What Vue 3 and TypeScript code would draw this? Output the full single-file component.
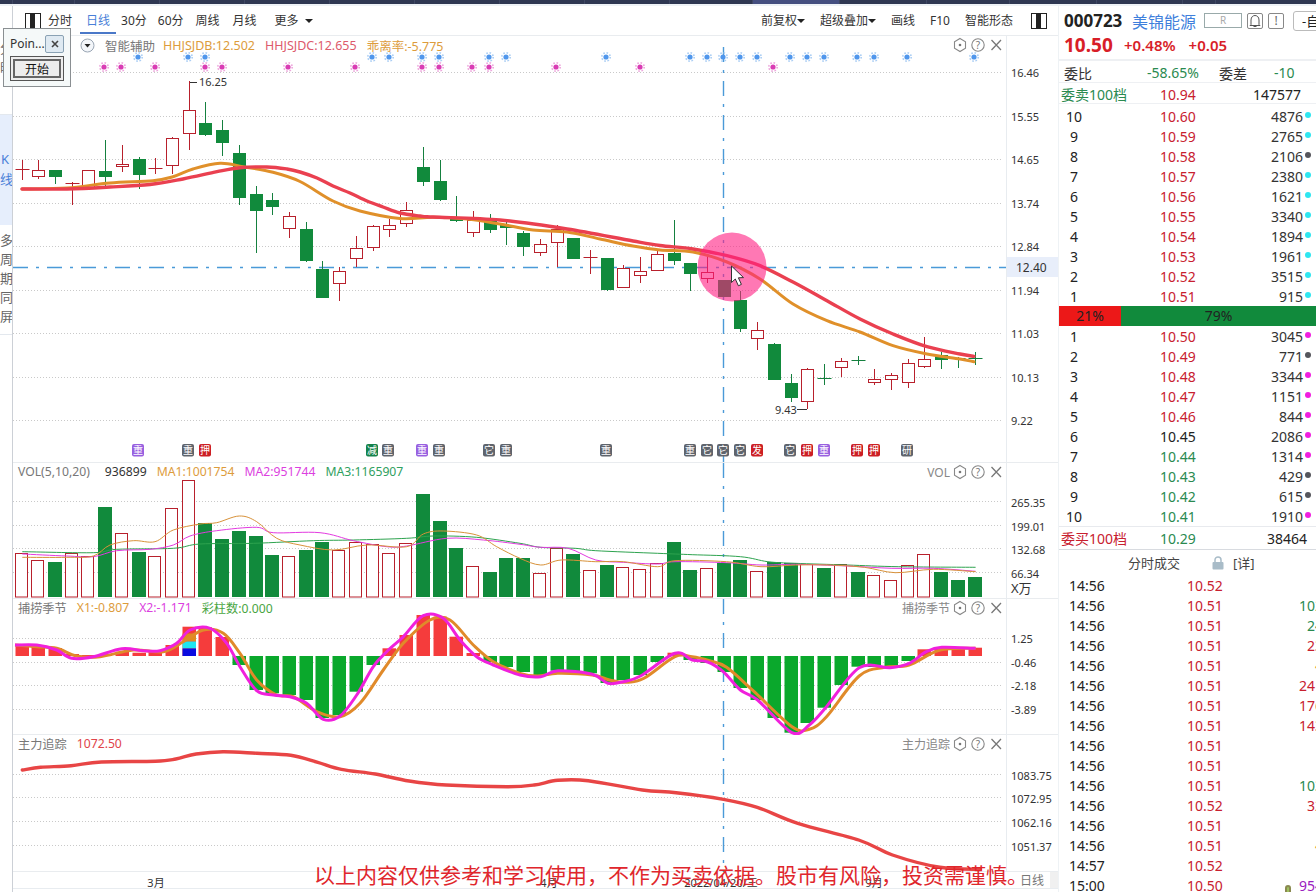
<script setup lang="ts">
type Pt = [number, number]
type Candle = [number, number, number, number, 'u' | 'd']

const X0 = 21.5
const STEP = 16.72
const xAt = (i: number) => X0 + STEP * i

// Catmull-Rom，把折线点变成平滑曲线
const smooth = (pts: Pt[]) => {
  let d = `M${pts[0][0].toFixed(1)} ${pts[0][1].toFixed(1)}`
  for (let i = 0; i < pts.length - 1; i++) {
    const p0 = pts[Math.max(i - 1, 0)]
    const p1 = pts[i]
    const p2 = pts[i + 1]
    const p3 = pts[Math.min(i + 2, pts.length - 1)]
    const c1x = p1[0] + (p2[0] - p0[0]) / 6
    const c1y = p1[1] + (p2[1] - p0[1]) / 6
    const c2x = p2[0] - (p3[0] - p1[0]) / 6
    const c2y = p2[1] - (p3[1] - p1[1]) / 6
    d += ` C${c1x.toFixed(1)} ${c1y.toFixed(1)} ${c2x.toFixed(1)} ${c2y.toFixed(1)} ${p2[0].toFixed(1)} ${p2[1].toFixed(1)}`
  }
  return d
}

const volA = (pts: number[][]): Pt[] => pts.map(([x, y]) => [x / 3, y / 3 + 430])
const volB = (pts: number[][]): Pt[] => pts.map(([x, y]) => [x / 2.904 + 520, y / 3 + 430])

const stripTabs = [13, 62, 85, 85, 85, 85, 85, 85, 85, 83, 87, 87, 83, 87, 86, 33]

const candles: Candle[] = [
  [161, 170, 170, 181, 'u'], [161, 171, 177, 180, 'u'], [171, 171, 178, 185, 'd'], [183, 184, 184, 206, 'u'],
  [171, 171, 189, 190, 'u'], [141, 172, 178, 187, 'd'], [146, 165, 167, 173, 'u'], [158, 160, 176, 190, 'd'],
  [159, 169, 169, 175, 'u'], [138, 139, 166, 175, 'u'], [82, 111, 134, 151, 'u'], [103, 124, 136, 137, 'd'],
  [121, 131, 144, 157, 'd'], [146, 154, 199, 206, 'd'], [187, 195, 212, 254, 'd'], [194, 201, 208, 216, 'd'],
  [213, 217, 229, 239, 'u'], [223, 230, 262, 263, 'd'], [262, 270, 299, 299, 'd'], [268, 272, 284, 302, 'u'],
  [237, 249, 259, 268, 'u'], [226, 227, 248, 252, 'u'], [220, 226, 230, 238, 'u'], [203, 211, 224, 228, 'u'],
  [148, 168, 183, 187, 'd'], [161, 182, 201, 202, 'd'], [197, 220, 222, 223, 'd'], [212, 221, 233, 238, 'u'],
  [215, 221, 231, 234, 'd'], [223, 226, 229, 246, 'd'], [232, 234, 248, 257, 'd'], [240, 245, 253, 257, 'u'],
  [226, 230, 243, 268, 'u'], [239, 239, 260, 260, 'd'], [251, 258, 258, 275, 'u'], [259, 259, 291, 292, 'd'],
  [266, 269, 288, 289, 'u'], [258, 272, 276, 284, 'u'], [250, 255, 271, 272, 'u'], [221, 254, 262, 266, 'd'],
  [264, 264, 275, 292, 'd'], [256, 273, 279, 284, 'u'], [281, 281, 298, 298, 'd'], [292, 301, 330, 333, 'd'],
  [323, 331, 339, 351, 'u'], [344, 345, 381, 381, 'd'], [375, 384, 399, 403, 'd'], [369, 370, 402, 410, 'u'],
  [365, 379, 379, 386, 'd'], [359, 362, 368, 378, 'u'], [357, 361, 361, 366, 'd'], [370, 380, 383, 386, 'u'],
  [374, 376, 380, 391, 'u'], [360, 364, 383, 389, 'u'], [338, 360, 367, 369, 'u'], [353, 356, 361, 370, 'd'],
  [358, 359, 359, 369, 'd'], [353, 359, 359, 366, 'd'],
]

const candleShapes = candles.map((c, i) => {
  const x = Math.round(xAt(i)) + 0.5
  return { x, high: c[0], top: c[1], bottom: c[2], low: c[3], kind: c[4], flat: c[2] - c[1] < 1 }
})

const maRed = smooth([
  [22, 190], [67, 190], [110, 188], [150, 185.5], [183, 180], [217, 172.7], [240, 168.7], [267, 168], [287, 170],
  [300, 173], [317, 179], [333, 187], [350, 194], [367, 202], [383, 208], [400, 214], [420, 217], [433, 218],
  [500, 221], [567, 230], [633, 242], [660, 246.5], [693, 250], [727, 256.7], [760, 266.7], [793, 283], [827, 301.7],
  [860, 320], [893, 335], [927, 347.7], [960, 355], [974, 357.3],
])
const maOrange = smooth([
  [22, 190], [67, 189], [110, 184], [153, 181.7], [173, 177.7], [193, 170], [220, 164.3], [243, 167.7], [273, 173.3],
  [300, 182.5], [333, 202], [360, 212], [400, 219.5], [433, 218.3], [467, 220], [500, 225], [533, 231], [567, 233],
  [600, 240], [633, 247], [660, 251], [693, 253], [727, 263], [760, 280], [793, 305], [827, 321.7], [860, 333],
  [893, 346.7], [927, 355], [960, 360], [974, 362.7],
])

const priceTicks = [
  { v: '16.46', y: 73 }, { v: '15.55', y: 117 }, { v: '14.65', y: 160 }, { v: '13.74', y: 204 }, { v: '12.84', y: 247 },
  { v: '11.94', y: 291 }, { v: '11.03', y: 334 }, { v: '10.13', y: 378 }, { v: '9.22', y: 421 },
]

const blueStars = [138, 188, 205, 372, 389, 422, 439, 489, 506, 606, 690, 707, 723, 740, 757, 790, 807, 824, 857, 874, 907, 974]
const pinkStars = [104, 121, 155, 205, 222, 288, 355, 422, 439, 472, 489, 556, 640, 773]

const TAG_GRAY = '#5f646c'
const TAG_RED = '#cc1f24'
const TAG_PURPLE = '#9860e0'
const TAG_GREEN = '#15824a'
const tags = [
  { x: 138, t: '重', c: TAG_PURPLE }, { x: 188, t: '重', c: TAG_GRAY }, { x: 205, t: '押', c: TAG_RED },
  { x: 372, t: '减', c: TAG_GREEN }, { x: 388, t: '重', c: TAG_GRAY }, { x: 422, t: '重', c: TAG_PURPLE },
  { x: 439, t: '重', c: TAG_GRAY }, { x: 489, t: '它', c: TAG_GRAY }, { x: 506, t: '重', c: TAG_GRAY },
  { x: 606, t: '重', c: TAG_GRAY }, { x: 690, t: '重', c: TAG_GRAY }, { x: 707, t: '它', c: TAG_GRAY },
  { x: 723, t: '它', c: TAG_GRAY }, { x: 740, t: '它', c: TAG_GRAY }, { x: 757, t: '发', c: TAG_RED },
  { x: 790, t: '它', c: TAG_GRAY }, { x: 807, t: '押', c: TAG_RED }, { x: 824, t: '重', c: TAG_PURPLE },
  { x: 857, t: '押', c: TAG_RED }, { x: 874, t: '押', c: TAG_RED }, { x: 907, t: '研', c: TAG_GRAY },
]

// 成交量：[顶部y, 是否阳线]
const VOL_BASE = 596.5
const volTops: [number, boolean][] = [
  [553, true], [560, true], [562, false], [553, true], [556, true], [507, false], [533, true], [552, false], [556, true],
  [508, true], [480, true], [523, false], [539, false], [531, false], [536, false], [555, false], [556, true], [550, false],
  [542, false], [550, true], [542, true], [544, true], [553, true], [543, true], [494, false], [521, false], [548, false],
  [566, true], [572, false], [558, false], [558, false], [573, true], [548, true], [554, false], [570, true], [565, false],
  [567, true], [569, true], [563, true], [542, false], [570, false], [568, true], [563, false], [560, false], [571, true],
  [562, false], [563, false], [564, true], [568, false], [564, true], [572, false], [575, true], [580, true], [565, true],
  [554, true], [572, false], [580, false], [577, false],
]
const volBars = volTops.map(([top, up], i) => ({ x: Math.round(xAt(i)) - 6.5, top, up }))

const volOrange = smooth([
  ...volA([[67, 382], [200, 382], [280, 378], [330, 345], [400, 332], [465, 335], [520, 300], [600, 282], [650, 278], [718, 258], [770, 275], [830, 325], [900, 345], [1000, 360], [1100, 345], [1220, 350], [1270, 312], [1330, 303], [1430, 315], [1490, 350]]),
  ...volB([[0, 385], [60, 405], [120, 390], [220, 395], [300, 395], [400, 410], [450, 392], [600, 395], [700, 410], [800, 405], [900, 405], [1000, 412], [1090, 428], [1200, 418], [1323, 425]]),
])
const volPink = smooth([
  ...volA([[67, 372], [200, 378], [280, 380], [350, 362], [450, 358], [520, 345], [570, 318], [650, 302], [770, 292], [820, 308], [960, 308], [1060, 332], [1160, 350], [1220, 348], [1340, 325], [1450, 330]]),
  ...volB([[0, 343], [60, 352], [140, 355], [220, 390], [300, 397], [400, 402], [450, 395], [600, 398], [700, 405], [800, 403], [950, 408], [1080, 415], [1200, 415], [1323, 424]]),
])
const volGreen = smooth([
  ...volA([[67, 365], [280, 368], [350, 358], [520, 355], [600, 342], [760, 340], [940, 332], [1060, 330], [1220, 325], [1300, 318], [1430, 322]]),
  ...volB([[0, 340], [60, 352], [160, 355], [220, 362], [400, 370], [500, 374], [640, 380], [720, 395], [800, 400], [950, 405], [1100, 410], [1323, 412]]),
])
const volTicks = [{ v: '265.35', y: 503 }, { v: '199.01', y: 527 }, { v: '132.68', y: 550 }, { v: '66.34', y: 574 }]

const ZERO = 656
const macdTops = [
  644, 646.7, 648, 654, 655, 654, 651.7, 652.7, 651.7, 645, 626.7, 627.3, 637, 665, 690, 693.3, 695, 700, 718, 715, 691.7, 665,
  648.3, 635, 615, 616.7, 636.7, 653, 662, 667, 672, 676, 670.7, 671.7, 673.3, 683, 680, 675, 662, 652.7, 660, 663, 672, 688,
  700, 718, 732.7, 723, 707.7, 685, 666.7, 667, 667, 661, 649.3, 647.3, 647.3, 647.7,
]
const macdBars = macdTops.map((top, i) => ({
  x: Math.round(xAt(i)) - 6.5,
  y: Math.min(top, ZERO),
  h: Math.abs(top - ZERO),
  up: top < ZERO,
}))
const macdPink = smooth([
  ...volA([[45, 645], [110, 645], [170, 660], [215, 685], [280, 680], [365, 656], [430, 662], [480, 662], [530, 640], [570, 600], [630, 595], [680, 640], [720, 710], [770, 782], [820, 795], [870, 800], [920, 820], [970, 868], [1020, 858], [1070, 795], [1120, 710], [1160, 665], [1210, 620], [1270, 557], [1330, 565], [1380, 630], [1430, 680], [1480, 705]]),
  ...volB([[0, 735], [60, 740], [110, 722], [210, 733], [255, 760], [300, 755], [350, 738], [450, 670], [500, 690], [545, 696], [590, 725], [640, 780], [690, 810], [790, 908], [840, 885], [890, 830], [985, 713], [1075, 713], [1130, 700], [1180, 665], [1225, 652], [1323, 655]]),
])
const macdOrange = smooth([
  ...volA([[45, 645], [110, 650], [170, 655], [230, 678], [300, 680], [400, 660], [490, 665], [550, 635], [610, 600], [670, 610], [720, 670], [770, 750], [830, 795], [880, 800], [950, 845], [1020, 860], [1080, 820], [1150, 720], [1210, 640], [1290, 570], [1350, 570], [1420, 645], [1480, 695]]),
  ...volB([[0, 730], [50, 738], [110, 730], [210, 735], [260, 750], [310, 757], [360, 745], [450, 680], [500, 680], [550, 692], [600, 712], [680, 785], [790, 890], [840, 898], [890, 860], [985, 738], [1060, 712], [1130, 705], [1220, 660], [1323, 655]]),
])
const macdTicks = [{ v: '1.25', y: 639 }, { v: '-0.46', y: 663 }, { v: '-2.18', y: 686 }, { v: '-3.89', y: 710 }]

const trackPts: Pt[] = [
  [33, 120], [60, 112], [105, 107], [150, 96], [230, 94], [260, 87], [290, 72], [330, 65], [380, 70], [430, 76], [470, 97],
  [505, 118], [555, 132], [605, 153], [660, 165], [750, 170], [790, 165], [825, 151], [870, 152], [950, 180], [1000, 188],
  [1070, 208], [1120, 232], [1180, 280], [1270, 330], [1320, 375], [1390, 412], [1450, 418],
].map(([x, y]) => [x / 1.479, y / 3 + 730] as Pt)
const trackLine = smooth(trackPts)
const trackTicks = [{ v: '1083.75', y: 776 }, { v: '1072.95', y: 799 }, { v: '1062.16', y: 823 }, { v: '1051.37', y: 847 }]

const sells = [
  { n: 10, p: '10.60', v: 4876, c: 'cyan' }, { n: 9, p: '10.59', v: 2765, c: 'cyan' }, { n: 8, p: '10.58', v: 2106, c: 'gray' },
  { n: 7, p: '10.57', v: 2380, c: 'cyan' }, { n: 6, p: '10.56', v: 1621, c: 'cyan' }, { n: 5, p: '10.55', v: 3340, c: 'cyan' },
  { n: 4, p: '10.54', v: 1894, c: 'cyan' }, { n: 3, p: '10.53', v: 1961, c: 'cyan' }, { n: 2, p: '10.52', v: 3515, c: 'cyan' },
  { n: 1, p: '10.51', v: 915, c: 'cyan' },
]
const buys = [
  { n: 1, p: '10.50', v: 3045, c: 'pink', t: 'up' }, { n: 2, p: '10.49', v: 771, c: 'gray', t: 'up' },
  { n: 3, p: '10.48', v: 3344, c: 'pink', t: 'up' }, { n: 4, p: '10.47', v: 1151, c: 'pink', t: 'up' },
  { n: 5, p: '10.46', v: 844, c: 'pink', t: 'up' }, { n: 6, p: '10.45', v: 2086, c: 'pink', t: 'flat' },
  { n: 7, p: '10.44', v: 1314, c: 'pink', t: 'down' }, { n: 8, p: '10.43', v: 429, c: 'gray', t: 'down' },
  { n: 9, p: '10.42', v: 615, c: 'gray', t: 'down' }, { n: 10, p: '10.41', v: 1910, c: 'pink', t: 'down' },
]
const trades = [
  { t: '14:56', p: '10.52', v: '', c: '' }, { t: '14:56', p: '10.51', v: '102', c: 'down' }, { t: '14:56', p: '10.51', v: '24', c: 'down' },
  { t: '14:56', p: '10.51', v: '23', c: 'up' }, { t: '14:56', p: '10.51', v: '4', c: 'tick' }, { t: '14:56', p: '10.51', v: '241', c: 'up' },
  { t: '14:56', p: '10.51', v: '176', c: 'up' }, { t: '14:56', p: '10.51', v: '143', c: 'up' }, { t: '14:56', p: '10.51', v: '', c: '' },
  { t: '14:56', p: '10.51', v: '', c: '' }, { t: '14:56', p: '10.51', v: '103', c: 'down' }, { t: '14:56', p: '10.52', v: '32', c: 'up' },
  { t: '14:56', p: '10.51', v: '', c: '' }, { t: '14:56', p: '10.51', v: '4', c: 'tick' }, { t: '14:57', p: '10.52', v: '', c: '' },
  { t: '15:00', p: '10.50', v: '954', c: 'big' },
]
</script>

<template>
  <div class="app">
    <div class="top-strip">
      <span
        v-for="(w, i) in stripTabs"
        :key="i"
        class="strip-tab"
        :class="{ 'strip-active': i === 10 }"
        :style="{ width: w + 'px' }"
      ></span>
    </div>

    <div class="body">
      <aside class="rail">
        <div class="rail-item rail-top">分<br />时</div>
        <div class="rail-item rail-active">K<br />线</div>
        <div class="rail-item rail-multi">多<br />周<br />期<br />同<br />屏</div>
      </aside>

      <main class="chart-col">
        <header class="toolbar">
          <span class="box-icon"><i></i></span>
          <span class="tb-btn tb-first">分时</span>
          <span class="tb-btn tb-active">日线</span>
          <span class="tb-btn">30分</span>
          <span class="tb-btn tb-wide">60分</span>
          <span class="tb-btn tb-wider">周线</span>
          <span class="tb-btn">月线</span>
          <span class="tb-btn tb-more">更多 <b class="caret"></b></span>
          <span class="tb-spacer"></span>
          <span class="tb-btn tb-right">前复权<b class="caret caret-sm"></b></span>
          <span class="tb-btn tb-right">超级叠加<b class="caret caret-sm"></b></span>
          <span class="tb-btn tb-right">画线</span>
          <span class="tb-btn tb-right">F10</span>
          <span class="tb-btn tb-right">智能形态</span>
          <span class="box-icon box-right"><i></i></span>
        </header>

        <svg width="0" height="0" class="defs">
          <defs>
            <symbol id="tools" viewBox="0 0 50 16">
              <path d="M7 1.5 L12.5 4.7 V11.3 L7 14.5 L1.5 11.3 V4.7 Z" fill="none" stroke="#888" stroke-width="1.1" />
              <circle cx="7" cy="8" r="1.3" fill="#777" />
              <circle cx="25" cy="8" r="6.2" fill="none" stroke="#888" stroke-width="1.1" />
              <text x="25" y="11.5" text-anchor="middle" font-size="10" fill="#777">?</text>
              <path d="M38.5 3 L48 13 M48 3 L38.5 13" stroke="#777" stroke-width="1.3" fill="none" />
            </symbol>
          </defs>
        </svg>

        <section class="panel panel-k">
          <div class="legend legend-k">
            <svg class="fold" width="15" height="15" viewBox="0 0 15 15">
              <circle cx="7.5" cy="7.5" r="6.5" fill="#f3f6fa" stroke="#9aa6b4" />
              <path d="M4.5 6 H10.5 L7.5 9.5 Z" fill="#222" />
            </svg>
            <span class="c-gray assist">智能辅助</span>
            <span class="c-orange">HHJSJDB:12.502</span>
            <span class="c-rose">HHJSJDC:12.655</span>
            <span class="c-orange">乖离率:-5.775</span>
          </div>
          <div class="tools"><svg width="50" height="16"><use href="#tools" /></svg></div>
          <svg class="plot" width="1045" height="426" viewBox="13 37 1045 426">
            <line x1="1006.5" y1="37" x2="1006.5" y2="463" class="axis" />
            <g v-for="t in priceTicks" :key="t.v">
              <line x1="13" :y1="t.y + 0.5" x2="1003" :y2="t.y + 0.5" class="grid" />
              <text x="1011" :y="t.y + 5" class="tick">{{ t.v }}</text>
            </g>
            <rect x="1007" y="258" width="51" height="20" fill="#e8eefa" />
            <text x="1016" y="273" class="tick tick-cur">12.40</text>

            <line x1="723.5" y1="48" x2="723.5" y2="463" class="cross" />
            <line x1="13" y1="268.5" x2="1006" y2="268.5" class="cross" />

            <g v-for="x in blueStars" :key="'b' + x">
              <circle :cx="x" cy="58" r="4.2" fill="none" stroke="#a9cdf4" stroke-width="1.6" stroke-dasharray="1.6 1.7" />
              <circle :cx="x" cy="58" r="2.6" fill="#4f96ec" />
            </g>
            <g v-for="x in pinkStars" :key="'p' + x">
              <circle :cx="x" cy="68" r="4.2" fill="none" stroke="#eda4dc" stroke-width="1.6" stroke-dasharray="1.6 1.7" />
              <circle :cx="x" cy="68" r="2.6" fill="#d93cb4" />
            </g>

            <g v-for="c in candleShapes" :key="c.x">
              <line :x1="c.x" :y1="c.high" :x2="c.x" :y2="c.low" :class="c.kind === 'u' ? 'wick-up' : 'wick-down'" />
              <line v-if="c.flat" :x1="c.x - 7" :y1="c.top + 0.5" :x2="c.x + 7" :y2="c.top + 0.5" :class="c.kind === 'u' ? 'wick-up' : 'wick-down'" />
              <rect v-else-if="c.kind === 'u'" :x="c.x - 6" :y="c.top + 0.5" width="12" :height="c.bottom - c.top" class="body-up" />
              <rect v-else :x="c.x - 6.5" :y="c.top" width="13" :height="c.bottom - c.top" class="body-down" />
            </g>

            <path :d="maOrange" class="ma ma-orange" />
            <path :d="maRed" class="ma ma-red" />

            <path d="M190 83.5 H197" class="mark" />
            <text x="199" y="87" class="mark-text">16.25</text>
            <path d="M797 410.5 H807" class="mark" />
            <text x="775" y="415" class="mark-text">9.43</text>

            <g v-for="t in tags" :key="'t' + t.x">
              <rect :x="t.x - 6" y="445" width="12" height="12.5" rx="2" :fill="t.c" />
              <text :x="t.x" y="455" text-anchor="middle" class="tag-text">{{ t.t }}</text>
            </g>
          </svg>
        </section>

        <section class="panel panel-sub">
          <div class="legend">
            <span class="c-gray w-vol">VOL(5,10,20)</span>
            <span class="c-dark">936899</span>
            <span class="c-orange">MA1:1001754</span>
            <span class="c-pink">MA2:951744</span>
            <span class="c-green">MA3:1165907</span>
          </div>
          <div class="tools"><span class="tools-name">VOL</span><svg width="50" height="16"><use href="#tools" /></svg></div>
          <svg class="plot" width="1045" height="136" viewBox="13 463 1045 136">
            <line x1="1006.5" y1="463" x2="1006.5" y2="599" class="axis" />
            <g v-for="t in volTicks" :key="t.v">
              <line x1="13" :y1="t.y - 1.5" x2="1003" :y2="t.y - 1.5" class="grid" />
              <text x="1011" :y="t.y + 4" class="tick">{{ t.v }}</text>
            </g>
            <text x="1011" y="593" class="tick tick-unit">X万</text>
            <line x1="723.5" y1="463" x2="723.5" y2="599" class="cross" />
            <g v-for="b in volBars" :key="b.x">
              <rect v-if="b.up" :x="b.x" :y="b.top + 0.5" width="12" :height="VOL_BASE - b.top" class="body-up" />
              <rect v-else :x="b.x - 0.5" :y="b.top" width="14" :height="VOL_BASE + 0.5 - b.top" class="body-down" />
            </g>
            <path :d="volGreen" class="thin" stroke="#2ea34f" />
            <path :d="volPink" class="thin" stroke="#e33ae0" />
            <path :d="volOrange" class="thin" stroke="#d8923a" />
          </svg>
        </section>

        <section class="panel panel-sub">
          <div class="legend">
            <span class="c-gray">捕捞季节</span>
            <span class="c-orange">X1:-0.807</span>
            <span class="c-pink">X2:-1.171</span>
            <span class="c-green2">彩柱数:0.000</span>
          </div>
          <div class="tools"><span class="tools-name">捕捞季节</span><svg width="50" height="16"><use href="#tools" /></svg></div>
          <svg class="plot" width="1045" height="136" viewBox="13 599 1045 136">
            <line x1="1006.5" y1="599" x2="1006.5" y2="735" class="axis" />
            <g v-for="t in macdTicks" :key="t.v">
              <line x1="13" :y1="t.y - 0.5" x2="1003" :y2="t.y - 0.5" class="grid" />
              <text x="1011" :y="t.y + 4" class="tick">{{ t.v }}</text>
            </g>
            <line x1="723.5" y1="599" x2="723.5" y2="735" class="cross" />
            <rect v-for="b in macdBars" :key="b.x" :x="b.x" :y="b.y" width="13.5" :height="b.h" :fill="b.up ? '#f53c3c' : '#0aa82c'" />
            <rect x="182.5" y="633.5" width="13.5" height="8" fill="#e08a20" />
            <rect x="182.5" y="641.5" width="13.5" height="7" fill="#1fe6f0" />
            <rect x="182.5" y="648.5" width="13.5" height="7.5" fill="#0a0ae0" />
            <path :d="macdOrange" class="ma-sub" stroke="#e08a2a" />
            <path :d="macdPink" class="ma-sub" stroke="#f020dc" />
          </svg>
        </section>

        <section class="panel panel-track">
          <div class="legend">
            <span class="c-gray">主力追踪</span>
            <span class="c-red">1072.50</span>
          </div>
          <div class="tools"><span class="tools-name">主力追踪</span><svg width="50" height="16"><use href="#tools" /></svg></div>
          <svg class="plot" width="1045" height="137" viewBox="13 735 1045 137">
            <line x1="1006.5" y1="735" x2="1006.5" y2="872" class="axis" />
            <g v-for="t in trackTicks" :key="t.v">
              <line x1="13" :y1="t.y - 1.5" x2="1003" :y2="t.y - 1.5" class="grid" />
              <text x="1011" :y="t.y + 4" class="tick">{{ t.v }}</text>
            </g>
            <line x1="723.5" y1="735" x2="723.5" y2="872" class="cross" />
            <path :d="trackLine" class="ma ma-track" />
          </svg>
        </section>

        <footer class="date-axis">
          <svg width="1045" height="20" viewBox="13 872 1045 20">
            <rect x="1050" y="872" width="8" height="17" fill="#f0f0f0" />
            <line x1="13" y1="888.5" x2="1058" y2="888.5" class="axis" />
            <text x="156" y="887" text-anchor="middle" class="tick">3月</text>
            <text x="549" y="887" text-anchor="middle" class="tick">4月</text>
            <text x="721" y="887" text-anchor="middle" class="tick">2022/04/20/三</text>
            <text x="874" y="887" text-anchor="middle" class="tick">9月</text>
            <text x="1020" y="885" class="tick tick-day">日线</text>
          </svg>
        </footer>
      </main>

      <aside class="side">
        <div class="quote-head">
          <span class="code">000723</span>
          <span class="name">美锦能源</span>
          <span class="r-box">R</span>
          <span class="mini-box">
            <svg width="12" height="14" viewBox="0 0 12 14"><path d="M2 10.5 V6 C2 3 4 1.5 6 1.5 C8 1.5 10 3 10 6 V10.5 L11 11.5 H1 Z M4.5 12.5 H7.5" fill="none" stroke="#555" /></svg>
          </span>
          <span class="mini-box mini-text">!</span>
          <span class="add-box">-自</span>
        </div>
        <div class="price-line">
          <span class="last">10.50</span>
          <span class="pct">+0.48%</span>
          <span class="pct">+0.05</span>
        </div>

        <div class="ratio-row">
          <span class="ratio-label">委比</span>
          <span class="down ratio-val">-58.65%</span>
          <span class="ratio-label ratio-label2">委差</span>
          <span class="down ratio-diff">-10</span>
        </div>
        <div class="total-row">
          <span class="total-label down">委卖100档</span>
          <span class="total-price up">10.94</span>
          <span class="total-vol">147577</span>
        </div>

        <div class="book book-sell">
          <div v-for="r in sells" :key="'s' + r.n" class="level">
            <span class="lv-n">{{ r.n }}</span>
            <span class="lv-p up">{{ r.p }}</span>
            <span class="lv-v">{{ r.v }}</span>
            <i class="dot" :class="r.c"></i>
          </div>
        </div>
        <div class="ratio-bar">
          <span class="bar-red">21%</span>
          <span class="bar-green">79%</span>
        </div>
        <div class="book">
          <div v-for="r in buys" :key="'by' + r.n" class="level">
            <span class="lv-n">{{ r.n }}</span>
            <span class="lv-p" :class="r.t">{{ r.p }}</span>
            <span class="lv-v">{{ r.v }}</span>
            <i class="dot" :class="r.c"></i>
          </div>
        </div>
        <div class="total-row total-buy">
          <span class="total-label up">委买100档</span>
          <span class="total-price down">10.29</span>
          <span class="total-vol total-vol2">38464</span>
        </div>

        <div class="trade-head">
          <span>分时成交</span>
          <svg class="lock" width="12" height="14" viewBox="0 0 12 14">
            <path d="M3 6 V4 C3 2.2 4.4 1 6 1 C7.6 1 9 2.2 9 4 V6" fill="none" stroke="#a9bcc8" stroke-width="1.5" />
            <rect x="0.5" y="6" width="11" height="7.5" rx="1" fill="#a9bcc8" />
          </svg>
          <span class="detail">[详]</span>
        </div>
        <div class="trades">
          <div v-for="(r, i) in trades" :key="i" class="trade">
            <span class="tr-t">{{ r.t }}</span>
            <span class="tr-p up">{{ r.p }}</span>
            <i v-if="r.c === 'big'" class="pin"></i>
            <span class="tr-v" :class="'v-' + r.c">{{ r.v }}</span>
          </div>
        </div>
      </aside>
    </div>

    <!-- 浮在图表之上的内容 -->
    <svg class="overlay" width="1316" height="892" viewBox="0 0 1316 892">
      <circle cx="732" cy="267" r="34.5" fill="#ff1e82" fill-opacity="0.6" />
      <path d="M731.5 266 V282.5 L735.3 279 L738.4 285.8 L741.4 284.4 L738.4 277.8 L743.5 277.6 Z" fill="#fff" stroke="#333" stroke-width="1" />
    </svg>

    <div class="popup">
      <div class="popup-title">
        <span>Poin...</span>
        <span class="popup-close">
          <svg width="8" height="8" viewBox="0 0 8 8"><path d="M1 1 L7 7 M7 1 L1 7" stroke="#444" stroke-width="1.6" /></svg>
        </span>
      </div>
      <button class="popup-btn" type="button">开始</button>
    </div>

    <div class="disclaimer">以上内容仅供参考和学习使用，不作为买卖依据。股市有风险，投资需谨慎。</div>
  </div>
</template>

<style>
html,
body {
  margin: 0;
  background: #fff;
}
</style>

<style scoped>
.app {
  position: relative;
  width: 1316px;
  height: 892px;
  overflow: hidden;
  background: #fff;
  font-family: "Noto Sans", "Noto Sans CJK SC", sans-serif;
  color: #222;
  display: flex;
  flex-direction: column;
}

.top-strip {
  height: 4px;
  background: #2f3752;
  display: flex;
  flex-shrink: 0;
}
.strip-tab {
  box-sizing: border-box;
  border-right: 1px solid #3f4763;
}
.strip-active {
  background: #454f80;
}

.body {
  flex: 1;
  display: flex;
  min-height: 0;
  border-top: 2px solid #eef2f6;
}

.rail {
  width: 12px;
  flex-shrink: 0;
  border-right: 1px solid #ccd0d6;
  overflow: hidden;
  display: flex;
  flex-direction: column;
  font-size: 13px;
  color: #666;
}
.rail-item {
  margin-left: -8px;
  padding-left: 8px;
  width: 20px;
  text-align: right;
  padding-right: 3px;
  box-sizing: border-box;
}
.rail-top {
  height: 109px;
  padding-top: 33px;
  line-height: 19px;
  border-bottom: 1px solid #e3e8ee;
}
.rail-active {
  height: 110px;
  padding-top: 34px;
  line-height: 20px;
  background: #e6eefc;
  color: #4a7fd8;
}
.rail-multi {
  height: 110px;
  padding-top: 6px;
  line-height: 19px;
  border-bottom: 1px solid #e3e8ee;
}

.chart-col {
  width: 1045px;
  flex-shrink: 0;
  display: flex;
  flex-direction: column;
}

.toolbar {
  height: 30px;
  display: flex;
  align-items: center;
  box-sizing: border-box;
  border-bottom: 1px solid #e9ecef;
  padding-left: 12px;
  font-size: 12px;
  color: #333;
  flex-shrink: 0;
}
.box-icon {
  width: 16px;
  height: 16px;
  box-sizing: border-box;
  border: 1px solid #222;
  display: flex;
  justify-content: center;
  margin-right: 7px;
}
.box-icon i {
  width: 5px;
  background: #222;
  margin-left: -2px;
}
.box-right {
  margin: 0 11px 0 18px;
}
.tb-btn {
  position: relative;
  height: 26px;
  line-height: 26px;
  margin-right: 11px;
  white-space: nowrap;
}
.tb-first {
  margin-right: 14px;
}
.tb-wide {
  margin-right: 12px;
}
.tb-wider {
  margin-right: 13px;
}
.tb-active {
  color: #4a7fd8;
}
.tb-active::after {
  content: "";
  position: absolute;
  left: -6px;
  right: -6px;
  bottom: 0;
  height: 2px;
  background: #4a78c8;
}
.tb-more {
  margin-left: 7px;
}
.tb-spacer {
  flex: 1;
}
.tb-right {
  margin: 0 0 0 15px;
}
.caret {
  display: inline-block;
  margin-left: 3px;
  border-left: 4px solid transparent;
  border-right: 4px solid transparent;
  border-top: 4px solid #222;
  vertical-align: 2px;
}
.caret-sm {
  margin-left: 0;
}

.defs {
  position: absolute;
}

.panel {
  position: relative;
  flex-shrink: 0;
  border-bottom: 1px solid #e9ecef;
  box-sizing: border-box;
}
.panel-k {
  height: 427px;
}
.panel-sub {
  height: 136px;
}
.panel-track {
  height: 137px;
}
.plot {
  display: block;
}

.legend {
  position: absolute;
  left: 5px;
  top: 0;
  height: 17px;
  display: flex;
  align-items: center;
  gap: 10px;
  font-size: 12.2px;
  white-space: nowrap;
  z-index: 1;
}
.legend-k {
  left: 67px;
  top: 1px;
  height: 16px;
  font-size: 12.5px;
}
.assist {
  margin-right: -2px;
}
.w-vol {
  margin-right: 5px;
}
.c-gray {
  color: #777;
}
.c-dark {
  color: #333;
}
.c-orange {
  color: #dd9c3c;
}
.c-rose {
  color: #dd5a6c;
}
.c-pink {
  color: #dc3fe0;
}
.c-green {
  color: #2fa060;
}
.c-green2 {
  color: #49a53f;
}
.c-red {
  color: #e0444a;
}

.tools {
  position: absolute;
  right: 55px;
  top: 1px;
  height: 16px;
  display: flex;
  align-items: center;
  gap: 3px;
  z-index: 1;
}
.tools svg {
  display: block;
}
.tools-name {
  font-size: 12px;
  color: #888;
}

.axis {
  stroke: #e8ecf0;
  stroke-width: 1;
}
.grid {
  stroke: #c9c9c9;
  stroke-width: 1;
  stroke-dasharray: 1 2;
}
.cross {
  stroke: #4a9ad8;
  stroke-width: 1.4;
  stroke-dasharray: 15 8 3 8;
}
.tick {
  font-size: 11px;
  fill: #333;
}
.tick-cur {
  font-size: 12px;
}
.tick-unit {
  font-size: 13px;
}
.tick-day {
  font-size: 12px;
  fill: #777;
}
.wick-up {
  stroke: #b8202c;
  stroke-width: 1;
}
.wick-down {
  stroke: #15803f;
  stroke-width: 1;
}
.body-up {
  fill: #fff;
  stroke: #b8202c;
  stroke-width: 1;
}
.body-down {
  fill: #118a3c;
}
.ma {
  fill: none;
  stroke-width: 3.4;
  stroke-linecap: round;
}
.ma-red {
  stroke: #ea4050;
}
.ma-orange {
  stroke: #e0902a;
  stroke-width: 3;
}
.ma-track {
  stroke: #e84545;
}
.thin {
  fill: none;
  stroke-width: 1;
}
.ma-sub {
  fill: none;
  stroke-width: 3;
}
.mark {
  stroke: #333;
  stroke-width: 1;
  fill: none;
}
.mark-text {
  font-size: 11px;
  fill: #333;
}
.tag-text {
  font-size: 10px;
  fill: #fff;
}

.date-axis {
  flex-shrink: 0;
  height: 20px;
}
.date-axis svg {
  display: block;
}

.side {
  width: 257px;
  flex-shrink: 0;
  border-left: 1px solid #eef2f5;
  overflow: hidden;
  display: flex;
  flex-direction: column;
  font-size: 14px;
}
.side > * {
  flex-shrink: 0;
}
.quote-head {
  height: 25px;
  padding-top: 2px;
  display: flex;
  align-items: center;
  padding-left: 5px;
  white-space: nowrap;
}
.quote-head > * {
  flex-shrink: 0;
}
.code {
  font-size: 17px;
  font-weight: 700;
  width: 68px;
}
.name {
  font-size: 16px;
  color: #3f7fdc;
  width: 72px;
}
.r-box {
  width: 38px;
  height: 15px;
  border: 1px solid #9aa;
  box-sizing: border-box;
  font-size: 10px;
  line-height: 13px;
  text-align: center;
  color: #aaa;
}
.mini-box {
  width: 16px;
  height: 16px;
  box-sizing: border-box;
  border: 1px solid #888;
  border-radius: 2px;
  margin-left: 5px;
  display: flex;
  align-items: center;
  justify-content: center;
}
.mini-text {
  font-size: 12px;
  color: #666;
}
.add-box {
  margin-left: 9px;
  width: 40px;
  height: 20px;
  border: 1px solid #bbb;
  border-radius: 3px;
  box-sizing: border-box;
  padding-left: 8px;
  font-size: 13px;
  line-height: 18px;
}
.price-line {
  height: 28px;
  display: flex;
  align-items: center;
  padding-left: 5px;
  color: #d81e28;
  box-sizing: border-box;
  border-bottom: 2px solid #eef0f3;
  padding-bottom: 2px;
}
.last {
  font-size: 19px;
  font-weight: 700;
  width: 60px;
}
.pct {
  font-size: 15px;
  font-weight: 600;
  margin-right: 13px;
}
.ratio-row {
  height: 22px;
  box-sizing: border-box;
  padding-top: 2px;
  display: flex;
  align-items: center;
  border-bottom: 1px solid #eef0f3;
  white-space: nowrap;
}
.ratio-label {
  margin-left: 5px;
  width: 83px;
  font-size: 14px;
  color: #333;
}
.ratio-val {
  width: 72px;
}
.ratio-label2 {
  margin-left: 0;
  width: 55px;
}
.up {
  color: #c8202f;
}
.down {
  color: #2a8a50;
}
.flat {
  color: #222;
}
.total-row {
  height: 21px;
  box-sizing: border-box;
  padding-top: 2px;
  display: flex;
  align-items: center;
  border-bottom: 1px solid #eef0f3;
  white-space: nowrap;
}
.total-buy {
  height: 24px;
  padding-top: 0;
  border-top: 1px solid #e8eaee;
  border-bottom: 1px solid #d8dbe0;
}
.total-label {
  width: 101px;
  padding-left: 2px;
  box-sizing: border-box;
  font-size: 14px;
}
.total-price {
  width: 48px;
}
.total-vol {
  width: 93px;
  text-align: right;
}
.total-vol2 {
  width: 99px;
}
.book-sell {
  padding-top: 2px;
}
.level {
  height: 20px;
  display: flex;
  align-items: center;
}
.lv-n {
  width: 26px;
  text-align: center;
  padding-left: 2px;
}
.lv-p {
  margin-left: 73px;
  width: 60px;
}
.lv-v {
  width: 83px;
  text-align: right;
  color: #333;
}
.dot {
  width: 6px;
  height: 6px;
  border-radius: 50%;
  margin: -3px 0 0 2px;
}
.dot.cyan {
  background: #2ee6f0;
}
.dot.gray {
  background: #55565c;
}
.dot.pink {
  background: #f01fe0;
}
.ratio-bar {
  height: 20px;
  display: flex;
  font-size: 14px;
  line-height: 20px;
  text-align: center;
  color: #222;
}
.bar-red {
  width: 62px;
  background: #ec1818;
}
.bar-green {
  flex: 1;
  background: #118a3c;
}
.trade-head {
  height: 25px;
  display: flex;
  align-items: center;
  font-size: 13px;
  color: #444;
  padding-left: 69px;
}
.lock {
  margin-left: 32px;
}
.detail {
  margin-left: 9px;
}
.trade {
  position: relative;
  height: 20px;
  display: flex;
  align-items: center;
}
.tr-t {
  margin-left: 10px;
  width: 118px;
}
.tr-p {
  width: 60px;
}
.tr-v {
  position: absolute;
  right: -7px;
  white-space: nowrap;
}
.v-down {
  color: #2a8a50;
}
.v-up {
  color: #c8202f;
}
.v-tick {
  color: #dca040;
}
.v-big {
  color: #9a20c0;
}
.pin {
  position: absolute;
  left: 226px;
  top: 10px;
  width: 6px;
  height: 9px;
  border-radius: 3px 3px 0 0;
  border: 2px solid #8a8a50;
  box-sizing: border-box;
  background: #9fc060;
}

.overlay {
  position: absolute;
  left: 0;
  top: 0;
  pointer-events: none;
}

.popup {
  position: absolute;
  left: 3px;
  top: 28px;
  width: 68px;
  height: 59px;
  box-sizing: border-box;
  background: #f5f9f9;
  border: 1px solid #8a8f92;
  padding: 5px 6px;
  font-size: 12px;
}
.popup-title {
  display: flex;
  align-items: center;
  justify-content: space-between;
  height: 19px;
  color: #333;
}
.popup-close {
  width: 19px;
  height: 18px;
  box-sizing: border-box;
  border: 1px solid #8aa2b4;
  border-radius: 2px;
  background: #dfeaf2;
  display: flex;
  align-items: center;
  justify-content: center;
}
.popup-btn {
  display: block;
  margin-top: 3px;
  width: 54px;
  height: 25px;
  padding: 0;
  background: #ededed;
  border: 1px solid #555;
  outline: 2px solid #666;
  outline-offset: -5px;
  font-family: inherit;
  font-size: 12px;
  color: #111;
}

.disclaimer {
  position: absolute;
  left: 314px;
  top: 860px;
  font-size: 21px;
  line-height: 30px;
  white-space: nowrap;
  color: #e0262c;
}
</style>
